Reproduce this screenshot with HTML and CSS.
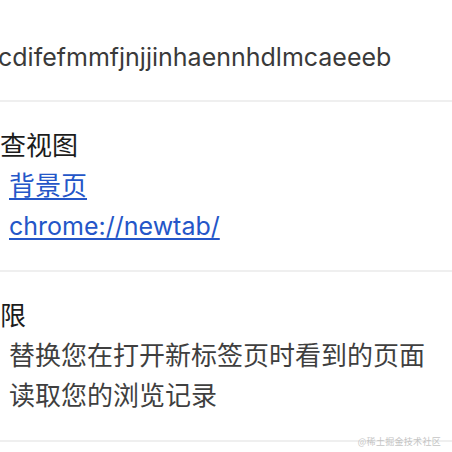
FILE: index.html
```html
<!DOCTYPE html>
<html lang="zh-CN">
<head>
<meta charset="utf-8">
<title>扩展程序详情</title>
<link rel="stylesheet" href="styles.css">
</head>
<body>
<main class="page">
  <section class="row row-id">
    <div class="ext-id">cdifefmmfjnjjinhaennhdlmcaeeeb</div>
  </section>
  <section class="row">
    <div class="title">查视图</div>
    <ul class="list">
      <li><a class="link" href="#">背景页</a></li>
      <li><a class="link link-url" href="#">chrome://newtab/</a></li>
    </ul>
  </section>
  <section class="row">
    <div class="title">限</div>
    <ul class="list">
      <li>替换您在打开新标签页时看到的页面</li>
      <li>读取您的浏览记录</li>
    </ul>
  </section>
</main>
<div class="watermark">@稀土掘金技术社区</div>
</body>
</html>
```
FILE: styles.css
```css
html, body {
  margin: 0;
  padding: 0;
  background: #ffffff;
}
body {
  width: 452px;
  height: 452px;
  overflow: hidden;
  position: relative;
  font-family: "Inter", "Noto Sans CJK SC", sans-serif;
  font-size: 26px;
  line-height: 40px;
}
.page {
  display: flex;
  flex-direction: column;
}
.row {
  padding: 24px 0 24px 0;
  border-bottom: 2px solid #efefef;
}
.row-id {
  padding: 37px 0 23px 0;
}
.ext-id {
  color: #3a3a3a;
  font-size: 25px;
  margin-left: -2px;
  white-space: nowrap;
}
.title {
  color: #1c1c1c;
  white-space: nowrap;
}
.list {
  list-style: none;
  margin: 0;
  padding: 0 0 0 9px;
  color: #3f3f3f;
}
.list li {
  white-space: nowrap;
}
.link {
  color: #2456c8;
  text-decoration: underline;
  text-underline-offset: 3px;
}
.link-url {
  font-size: 25px;
}
.watermark {
  position: absolute;
  right: 11px;
  bottom: 4px;
  font-family: "Noto Sans CJK SC", sans-serif;
  font-size: 9px;
  line-height: 12px;
  color: #c4c4c4;
  letter-spacing: 0.3px;
}
```
